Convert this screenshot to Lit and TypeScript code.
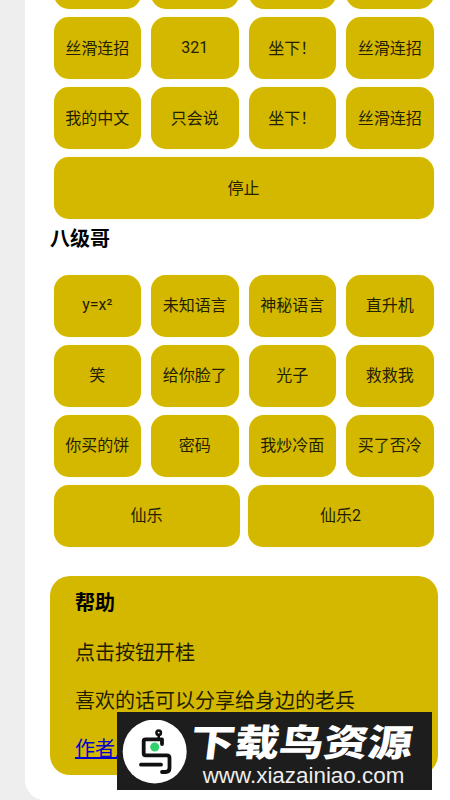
import { LitElement, html, css } from "lit";
import { customElement } from "lit/decorators.js";

const rowsA = [
  ["丝滑连招", "321", "坐下！", "丝滑连招"],
  ["我的中文", "只会说", "坐下！", "丝滑连招"],
];
const rowsB = [
  ["y=x²", "未知语言", "神秘语言", "直升机"],
  ["笑", "给你脸了", "光子", "救救我"],
  ["你买的饼", "密码", "我炒冷面", "买了否冷"],
];

@customElement("app-root")
export class AppRoot extends LitElement {
  static styles = css`
    :host {
      display: block;
      position: relative;
      width: 450px;
      height: 800px;
      overflow: hidden;
      background: #eeeeee;
      font-family: Roboto, "Noto Sans CJK SC", sans-serif;
      color: #000;
    }
    .panel {
      margin-left: 25px;
      height: 800px;
      background: #fff;
      border-radius: 0 0 0 20px;
      padding: 0 12px 0 25px;
      box-sizing: border-box;
      overflow: hidden;
    }
    .grid {
      display: grid;
      grid-template-columns: repeat(4, 1fr);
      gap: 8px 10px;
      margin: 0 4.5px 0 3.5px;
    }
    .first {
      margin-top: -53px;
    }
    .btn {
      height: 62px;
      background: #d4b800;
      border-radius: 15px;
      box-shadow: 0 0 1px #f3e66a;
      box-sizing: border-box;
      padding-bottom: 2px;
      display: flex;
      align-items: center;
      justify-content: center;
      font-size: 16px;
      color: #231f00;
      white-space: nowrap;
    }
    .lower .btn { padding-bottom: 4px; }
    .full { grid-column: 1 / -1; }
    .two {
      display: grid;
      grid-template-columns: 1fr 1fr;
      gap: 8px;
      margin: 8px 4.5px 0 3.5px;
    }
    h2 {
      margin: 8px 0 24px 0;
      font-size: 20px;
      line-height: 24px;
      font-weight: 700;
    }
    .help {
      margin-top: 29px;
      height: 199px;
      background: #d4b800;
      border-radius: 20px;
      padding: 14px 25px;
      box-sizing: border-box;
      font-size: 20px;
      line-height: 26px;
    }
    .help p { margin: 0 0 22px; color: #221d00; }
    .help .t { font-weight: 700; color: #000; margin-bottom: 24px; }
    a { color: #0000d0; text-decoration: underline; }
    .mark {
      position: absolute;
      left: 117px;
      top: 712px;
      width: 315px;
      height: 78px;
      background: #1d1d1d;
      color: #fff;
      display: flex;
      padding: 8px 0 0 5px;
      box-sizing: border-box;
    }
    .logo { width: 65px; height: 65px; flex: none; }
    .brand {
      display: flex;
      flex-direction: column;
      align-items: center;
      width: 229px;
      margin: 5px 0 0 2px;
    }
    .cn {
      font-size: 37px;
      line-height: 38px;
      font-weight: 900;
      white-space: nowrap;
      margin-right: 5px;
      transform: scaleX(1.2) skewX(-6deg);
    }
    .url {
      font-family: "Liberation Sans", sans-serif;
      font-size: 22.4px;
      line-height: 24px;
      white-space: nowrap;
      margin-top: 1px;
      color: #eeeeee;
    }
  `;

  private row(items: string[]) {
    return items.map((t) => html`<div class="btn">${t}</div>`);
  }

  render() {
    return html`
      <div class="panel">
        <div class="grid first">
          ${this.row(["", "", "", ""])}
          ${rowsA.map((r) => this.row(r))}
          <div class="btn full">停止</div>
        </div>
        <h2>八级哥</h2>
        <div class="lower">
          <div class="grid">${rowsB.map((r) => this.row(r))}</div>
          <div class="two">
            <div class="btn">仙乐</div>
            <div class="btn">仙乐2</div>
          </div>
        </div>
        <div class="help">
          <p class="t">帮助</p>
          <p>点击按钮开桂</p>
          <p>喜欢的话可以分享给身边的老兵</p>
          <p><a href="#">作者主页</a></p>
        </div>
      </div>
      <div class="mark">
        <svg class="logo" viewBox="0 0 65 65">
          <circle cx="32.7" cy="31.5" r="32" fill="#fff" />
          <g fill="none" stroke="#111" stroke-width="3.8" stroke-linecap="round" stroke-linejoin="round">
            <circle cx="36.7" cy="12.7" r="2.2" stroke-width="2.6" />
            <path d="M36.7 15 V19.3" stroke-width="2.6" />
            <path d="M40 24 V19.3 H23.3 Q21.7 19.3 21.7 21 V33.5 Q21.7 35.3 23.5 35.3 H45 Q47.5 35.3 47.5 38 V48 Q47.5 52 43.5 52 H40" />
            <path d="M19 44.7 H39" />
          </g>
          <circle cx="32.7" cy="27" r="4.5" fill="#2fd36b" />
        </svg>
        <div class="brand">
          <div class="cn">下载鸟资源</div>
          <div class="url">www.xiazainiao.com</div>
        </div>
      </div>
    `;
  }
}
